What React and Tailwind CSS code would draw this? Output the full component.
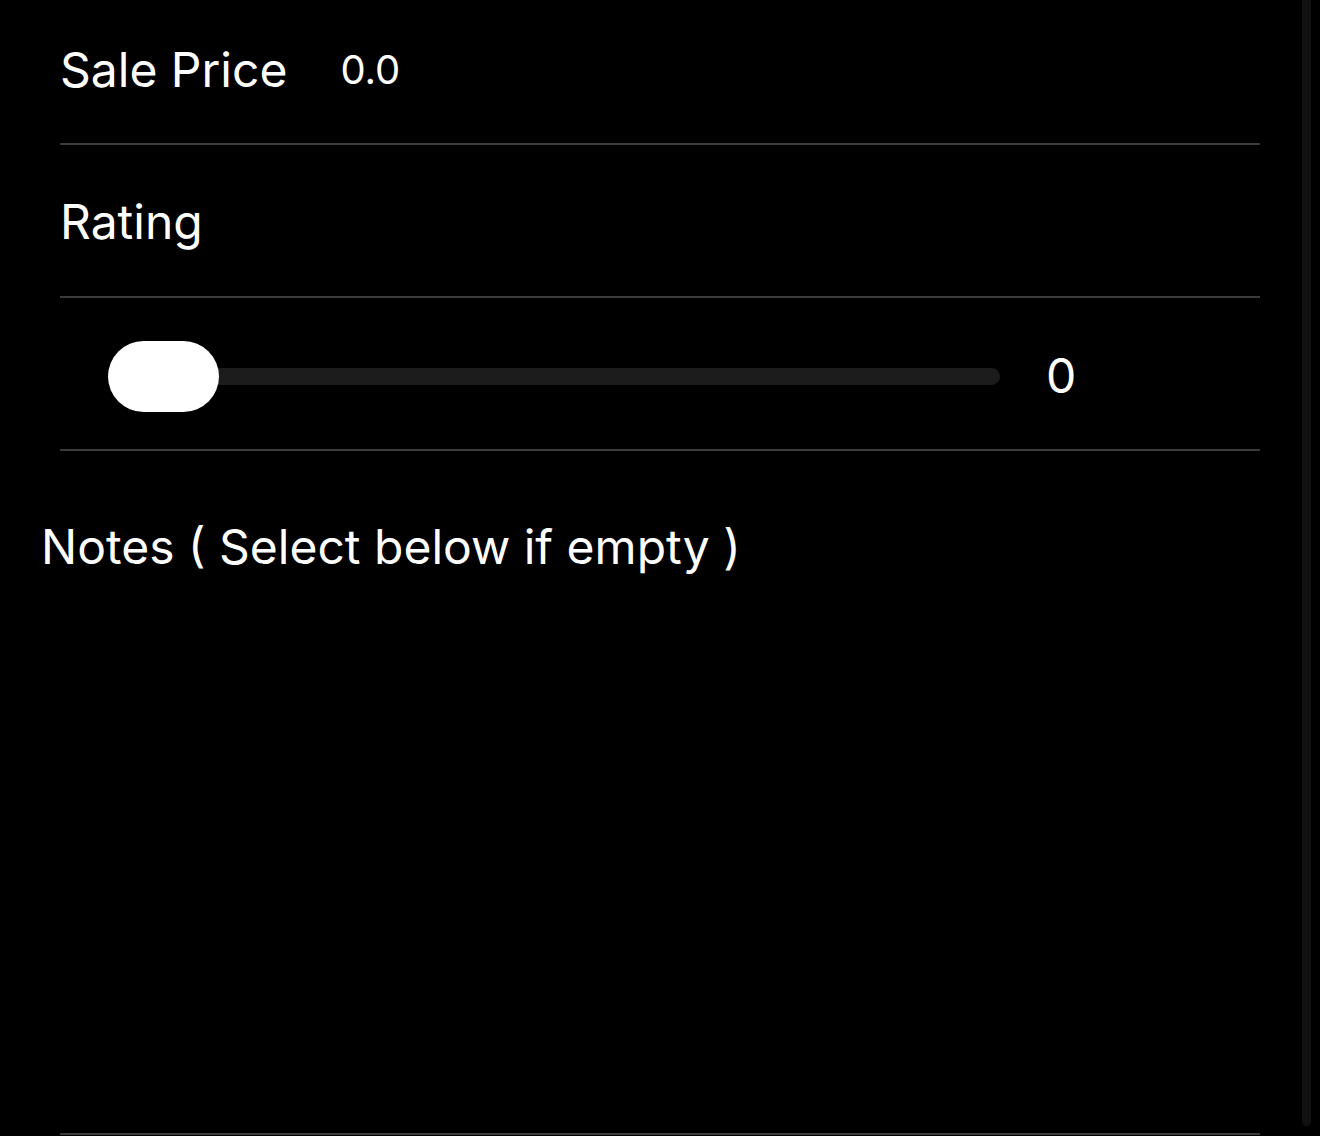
import React, { useState } from "react";

const font = { fontFamily: "Inter, 'Liberation Sans', sans-serif" };

const App = () => {
  const [rating] = useState(0);

  return (
    <div className="relative w-[1320px] h-[1136px] overflow-hidden bg-black text-white" style={font}>
      {/* scrollbar */}
      <div className="absolute right-[9px] top-0 w-[9px] h-[1126px] rounded-b-full bg-[#111111]" />

      <div className="px-[60px]">
        {/* Sale Price */}
        <div className="h-[145px] flex items-center gap-[53px] pb-[4px] border-b-2 border-[#3c3c3c]">
          <span className="text-[48px] leading-none">Sale Price</span>
          <span className="text-[40px] leading-none">0.0</span>
        </div>

        {/* Rating */}
        <div className="h-[153px] flex items-center pt-[2px] border-b-2 border-[#3c3c3c]">
          <span className="text-[48px] leading-none">Rating</span>
        </div>

        {/* Slider */}
        <div className="h-[153px] flex items-center pl-[48px] pt-[5px] border-b-2 border-[#3c3c3c]">
          <div className="relative w-[892px] h-[71px] flex items-center">
            <div className="w-full h-[17px] rounded-full bg-[#1c1c1c]" />
            <div className="absolute left-0 top-0 w-[111px] h-[71px] rounded-full bg-white" />
          </div>
          <span className="ml-[46px] text-[48px] leading-none">{rating}</span>
        </div>
      </div>

      {/* Notes */}
      <div className="pl-[41px] pt-[72px]">
        <span className="text-[48px] leading-none">Notes ( Select below if empty )</span>
      </div>
      <div className="mx-[60px] h-[564px] border-b-2 border-[#3c3c3c]" />
    </div>
  );
};

export default App;
